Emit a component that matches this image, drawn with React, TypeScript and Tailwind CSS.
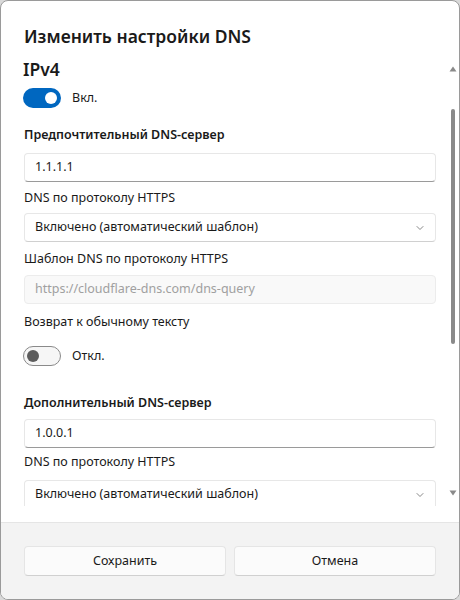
import React from 'react';
import { ChevronDown } from 'lucide-react';

const font = { fontFamily: '"Noto Sans", "Open Sans", sans-serif' };

const Toggle: React.FC<{ on: boolean; label: string }> = ({ on, label }) => (
  <div className="flex items-center h-5 -ml-[1px]">
    {on ? (
      <div className="w-[38px] h-[20px] rounded-full bg-[#0067c0] flex items-center justify-end pr-[4px]">
        <div className="w-3 h-3 rounded-full bg-white" />
      </div>
    ) : (
      <div className="w-[38px] h-[20px] rounded-full border border-[#8a8a8a] bg-[#f6f6f6] flex items-center pl-[3px]">
        <div className="w-3 h-3 rounded-full bg-[#5d5d5d]" />
      </div>
    )}
    <span className="ml-[11px] text-[12.5px] text-[#1a1a1a]">{label}</span>
  </div>
);

const Input: React.FC<{ value: string; disabled?: boolean }> = ({ value, disabled }) => (
  <div
    className={`h-[29px] rounded-[4px] border flex items-center px-[10px] text-[12.5px] ${
      disabled
        ? 'bg-[#f9f9f9] border-[#ececec] text-[#a0a0a0]'
        : 'bg-white border-[#e7e7e7] border-b-[#9a9a9a] text-[#1a1a1a]'
    }`}
  >
    {value}
  </div>
);

const Select: React.FC<{ value: string }> = ({ value }) => (
  <div className="h-[29px] rounded-[4px] border border-[#e7e7e7] border-b-[#d0d0d0] bg-white flex items-center justify-between px-[10px] text-[12.5px] text-[#1a1a1a] shrink-0">
    <span>{value}</span>
    <ChevronDown className="w-3 h-3 text-[#606060] -mr-[1px]" strokeWidth={1.5} />
  </div>
);

export default function App() {
  return (
    <div style={font} className="w-[460px] h-[600px] bg-[#d9d9d9]">
      <div className="w-full h-full rounded-[8px] border border-[#9a9a9a] bg-white overflow-hidden flex flex-col">
        {/* Content */}
        <div className="flex-1 flex flex-col min-h-0">
          <h1 className="pl-[23px] pt-[23px] text-[17.5px] font-semibold text-[#1a1a1a] leading-[24px]">
            Изменить настройки DNS
          </h1>
          <div className="flex flex-1 min-h-0 mt-[8px] pb-[16px]">
            <div className="flex-1 overflow-hidden pl-[23px] pr-[11px]">
              <div className="text-[17.5px] font-semibold text-[#1a1a1a] leading-[26px] -ml-[1px]">IPv4</div>
              <div className="mt-[6px]">
                <Toggle on label="Вкл." />
              </div>

              <div className="mt-[17px] text-[12.5px] font-semibold text-[#1a1a1a] leading-[20px]">
                Предпочтительный DNS-сервер
              </div>
              <div className="mt-[8px]">
                <Input value="1.1.1.1" />
              </div>

              <div className="mt-[6px] text-[12.5px] text-[#1a1a1a] leading-[20px]">DNS по протоколу HTTPS</div>
              <div className="mt-[5px]">
                <Select value="Включено (автоматический шаблон)" />
              </div>

              <div className="mt-[7px] text-[12.5px] text-[#1a1a1a] leading-[20px]">Шаблон DNS по протоколу HTTPS</div>
              <div className="mt-[6px]">
                <Input value="https://cloudflare-dns.com/dns-query" disabled />
              </div>

              <div className="mt-[8px] text-[12.5px] text-[#1a1a1a] leading-[20px]">Возврат к обычному тексту</div>
              <div className="mt-[14px]">
                <Toggle on={false} label="Откл." />
              </div>

              <div className="mt-[27px] text-[12.5px] font-semibold text-[#1a1a1a] leading-[20px]">
                Дополнительный DNS-сервер
              </div>
              <div className="mt-[6px]">
                <Input value="1.0.0.1" />
              </div>

              <div className="mt-[4px] text-[12.5px] text-[#1a1a1a] leading-[20px]">DNS по протоколу HTTPS</div>
              <div className="mt-[8px]">
                <Select value="Включено (автоматический шаблон)" />
              </div>
            </div>

            {/* Scrollbar */}
            <div className="w-[12px] flex flex-col items-center pr-[1px] pt-[10px]">
              <svg width="8" height="6" viewBox="0 0 8 6">
                <path d="M4 0.5 L7.5 5.5 L0.5 5.5 Z" fill="#8a8a8a" />
              </svg>
              <div className="mt-[37px] w-[4px] h-[235px] rounded-full bg-[#8a8a8a]" />
              <div className="flex-1" />
              <svg width="8" height="6" viewBox="0 0 8 6" className="mb-[10px]">
                <path d="M4 5.5 L7.5 0.5 L0.5 0.5 Z" fill="#8a8a8a" />
              </svg>
            </div>
          </div>
        </div>

        {/* Footer */}
        <div className="h-[77px] shrink-0 bg-[#f3f3f3] border-t border-[#e5e5e5] flex gap-[8px] pl-[23px] pr-[23px] pt-[23px]">
          <button className="flex-1 h-[30px] rounded-[4px] border border-[#e5e5e5] border-b-[#d0d0d0] bg-[#fbfbfb] text-[12.5px] text-[#1a1a1a]">
            Сохранить
          </button>
          <button className="flex-1 h-[30px] rounded-[4px] border border-[#e5e5e5] border-b-[#d0d0d0] bg-[#fbfbfb] text-[12.5px] text-[#1a1a1a]">
            Отмена
          </button>
        </div>
      </div>
    </div>
  );
}
